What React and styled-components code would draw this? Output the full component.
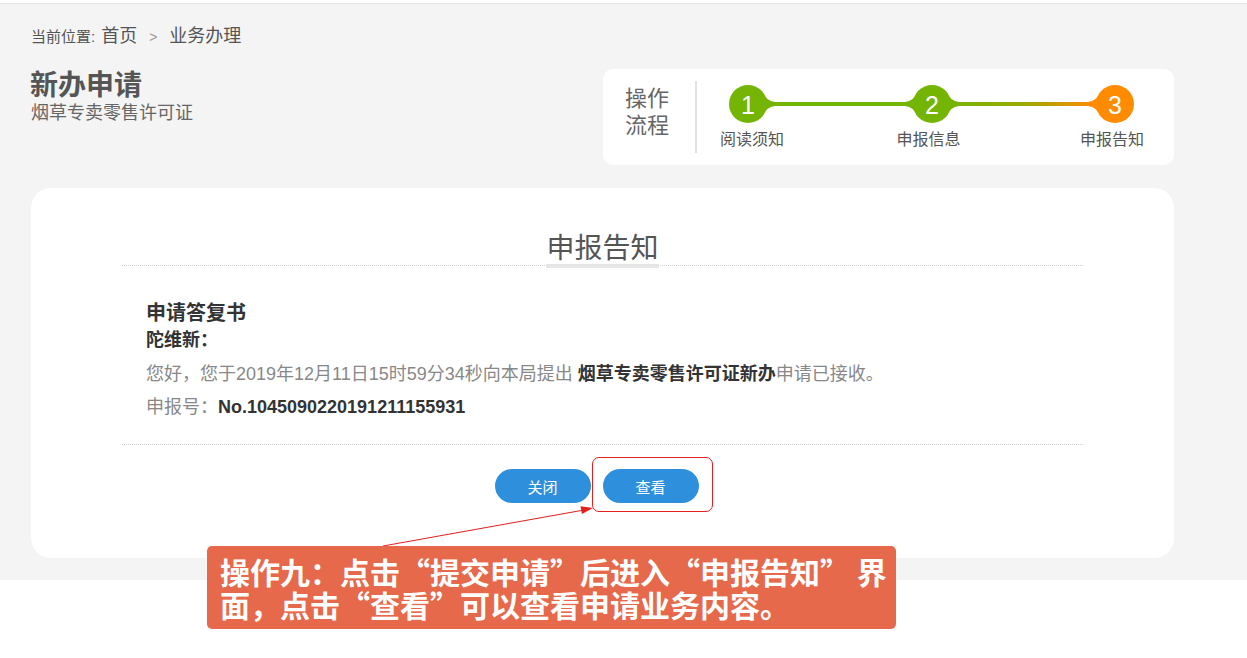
import React from 'react';
import styled, { createGlobalStyle } from 'styled-components';

const GlobalStyle = createGlobalStyle`
  html, body {
    margin: 0;
    padding: 0;
    background: #fff;
  }
  body {
    font-family: "Liberation Sans", "Noto Sans CJK SC", sans-serif;
    color: #555;
  }
`;

const Page = styled.div`
  position: relative;
  width: 1247px;
  height: 658px;
  padding-top: 3px;
  box-sizing: border-box;
`;

const GraySection = styled.div`
  background: #f4f4f4;
  border-top: 1px solid #e4e4e4;
  padding: 22px 73px 22px 31px;
`;

const Breadcrumb = styled.div`
  display: flex;
  align-items: baseline;
  line-height: 20px;
  font-size: 18px;
  color: #555;
`;

const CrumbLabel = styled.span`
  font-size: 15px;
  margin-right: 6px;
`;

const CrumbSep = styled.span`
  color: #999;
  font-size: 14px;
  margin: 0 12px;
`;

const HeaderRow = styled.div`
  margin-top: 22px;
  display: flex;
  justify-content: space-between;
  align-items: flex-start;
`;

const TitleBlock = styled.div`
  padding-top: 0;
`;

const PageTitle = styled.h1`
  margin: 0 0 0 -1px;
  font-size: 28px;
  line-height: 33px;
  font-weight: bold;
  color: #555;
`;

const SubTitle = styled.div`
  font-size: 18px;
  line-height: 22px;
  color: #666;
`;

const StepsCard = styled.div`
  width: 571px;
  height: 96px;
  box-sizing: border-box;
  background: #fff;
  border-radius: 10px;
  display: flex;
  align-items: flex-start;
  padding: 12px 40px 0 22px;
`;

const FlowText = styled.div`
  width: 46px;
  margin-top: 4px;
  font-size: 22px;
  line-height: 27px;
  color: #666;
`;

const Divider = styled.div`
  width: 2px;
  height: 72px;
  background: #e2e2e2;
  margin-left: 24px;
`;

const Stepper = styled.div`
  margin-left: 32px;
  margin-top: 4px;
  flex: 1;
  display: grid;
  grid-template-columns: 38px 1fr 38px 1fr 38px;
  grid-template-rows: 38px 20px;
  row-gap: 7px;
  align-items: center;
`;

const Track = styled.div`
  height: 4px;
  background: ${(p) => p.$bg};
`;

const StepLabel = styled.div`
  display: flex;
  justify-content: center;
  white-space: nowrap;
  font-size: 16px;
  line-height: 20px;
  color: #555;
  grid-row: 2;
  grid-column: ${(p) => p.$col};
  transform: translateX(${(p) => p.$shift || 0}px);
`;

const NodeSvg = styled.svg`
  display: block;
  overflow: visible;
  position: relative;
  z-index: 1;
`;

const GREEN = '#74b504';
const ORANGE = '#ff8b00';

const StepNode = ({ n, color, left, right }) => (
  <NodeSvg width="38" height="38" viewBox="0 0 38 38">
    {right && <path d="M33.5 6.8 Q37 16 46 17 L46 21 Q37 22 33.5 31.2 Z" fill={color} />}
    {left && <path d="M4.5 6.8 Q1 16 -8 17 L-8 21 Q1 22 4.5 31.2 Z" fill={color} />}
    <circle cx="19" cy="19" r="19" fill={color} />
    <text
      x="19"
      y="20"
      textAnchor="middle"
      dominantBaseline="central"
      fill="#fff"
      fontSize="25"
      fontFamily="Liberation Sans, sans-serif"
    >
      {n}
    </text>
  </NodeSvg>
);

const MainCard = styled.div`
  margin-top: 23px;
  background: #fff;
  border-radius: 20px;
  padding: 45px 91px 55px;
`;

const SectionHead = styled.div`
  display: flex;
  justify-content: center;
  border-bottom: 1px dotted #cfcfcf;
`;

const SectionTitle = styled.div`
  font-size: 28px;
  line-height: 31px;
  color: #555;
  border-bottom: 4px solid #e6e6e6;
  margin-bottom: -3px;
`;

const Letter = styled.div`
  padding: 0 24px 24px;
  border-bottom: 1px dotted #cfcfcf;
`;

const LetterTitle = styled.div`
  margin-top: 33px;
  font-size: 20px;
  line-height: 28px;
  font-weight: bold;
  color: #333;
`;

const Addressee = styled.div`
  font-size: 18px;
  line-height: 26px;
  font-weight: bold;
  color: #333;
`;

const Line = styled.div`
  margin-top: ${(p) => p.$mt}px;
  font-size: 18px;
  line-height: 26px;
  color: #888;
`;

const Strong = styled.b`
  color: #333;
`;

const Actions = styled.div`
  margin-top: 24px;
  display: flex;
  justify-content: center;
  gap: 12px;
  padding-right: 12px;
`;

const BtnWrap = styled.div`
  position: relative;
`;

const Button = styled.button`
  width: 96px;
  height: 34px;
  border: none;
  border-radius: 17px;
  background: #2e8fdd;
  color: #fff;
  font-family: "Liberation Sans", "Noto Sans CJK SC", sans-serif;
  font-size: 15px;
  cursor: pointer;
`;

const Highlight = styled.div`
  position: absolute;
  left: -11px;
  right: -14px;
  top: -12px;
  bottom: -9px;
  border: 1.5px solid #e3201b;
  border-radius: 7px;
  pointer-events: none;
`;

const Arrow = styled.svg`
  position: absolute;
  left: 0;
  top: 0;
  pointer-events: none;
`;

const Callout = styled.div`
  position: absolute;
  left: 207px;
  top: 546px;
  width: 689px;
  height: 83px;
  box-sizing: border-box;
  padding: 9px 13px;
  background: #e5694a;
  border-radius: 5px;
  color: #fff;
  font-size: 30px;
  line-height: 33px;
  font-weight: bold;
  font-family: "Noto Sans CJK SC", sans-serif;
  white-space: nowrap;
`;

export default function App() {
  return (
    <>
      <GlobalStyle />
      <Page>
        <GraySection>
          <Breadcrumb>
            <CrumbLabel>当前位置:</CrumbLabel>
            <span>首页</span>
            <CrumbSep>&gt;</CrumbSep>
            <span>业务办理</span>
          </Breadcrumb>

          <HeaderRow>
            <TitleBlock>
              <PageTitle>新办申请</PageTitle>
              <SubTitle>烟草专卖零售许可证</SubTitle>
            </TitleBlock>

            <StepsCard>
              <FlowText>操作<br />流程</FlowText>
              <Divider />
              <Stepper>
                <StepNode n="1" color={GREEN} right />
                <Track $bg={GREEN} />
                <StepNode n="2" color={GREEN} left right />
                <Track $bg={`linear-gradient(90deg, ${GREEN} 0%, #9aaa00 50%, ${ORANGE} 100%)`} />
                <StepNode n="3" color={ORANGE} left />
                <StepLabel $col={1} $shift={4}>阅读须知</StepLabel>
                <StepLabel $col={3} $shift={-3}>申报信息</StepLabel>
                <StepLabel $col={5} $shift={-3}>申报告知</StepLabel>
              </Stepper>
            </StepsCard>
          </HeaderRow>

          <MainCard>
            <SectionHead>
              <SectionTitle>申报告知</SectionTitle>
            </SectionHead>
            <Letter>
              <LetterTitle>申请答复书</LetterTitle>
              <Addressee>陀维新：</Addressee>
              <Line $mt={8}>
                您好，您于2019年12月11日15时59分34秒向本局提出 <Strong>烟草专卖零售许可证新办</Strong>申请已接收。
              </Line>
              <Line $mt={7}>
                申报号：<Strong>No.1045090220191211155931</Strong>
              </Line>
            </Letter>
            <Actions>
              <Button>关闭</Button>
              <BtnWrap>
                <Button>查看</Button>
                <Highlight />
              </BtnWrap>
            </Actions>
          </MainCard>
        </GraySection>

        <Arrow width="1247" height="658" viewBox="0 0 1247 658">
          <line x1="383" y1="546" x2="584" y2="510" stroke="#e3201b" strokeWidth="1" />
          <polygon points="593,508 581.9,514 580.5,506.2" fill="#e3201b" />
        </Arrow>

        <Callout>
          操作九：点击“提交申请”后进入“申报告知” 界<br />
          面，点击“查看”可以查看申请业务内容。
        </Callout>
      </Page>
    </>
  );
}
